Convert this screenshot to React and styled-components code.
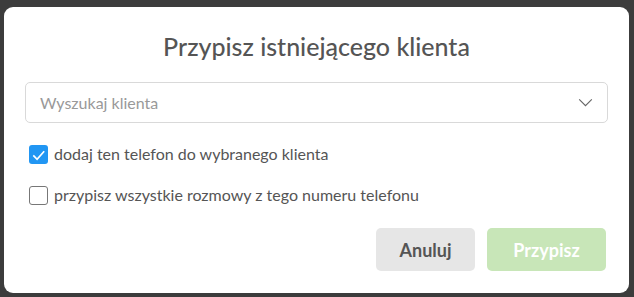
import React, { useState } from "react";
import styled, { createGlobalStyle } from "styled-components";

const Global = createGlobalStyle`
  html, body {
    margin: 0;
    padding: 0;
    background: #3c3c3c;
    font-family: Lato, "Open Sans", sans-serif;
  }
`;

export default function App() {
  const [addPhone, setAddPhone] = useState(true);
  const [assignAll, setAssignAll] = useState(false);

  return (
    <>
      <Global />
      <Backdrop>
        <Modal>
          <Title>Przypisz istniejącego klienta</Title>
          <Select>
            <Placeholder>Wyszukaj klienta</Placeholder>
            <Chevron viewBox="0 0 16 10">
              <path d="M1 1.5 L8 8.5 L15 1.5" fill="none" stroke="#666" strokeWidth="1.3" />
            </Chevron>
          </Select>
          <Options>
            <Option onClick={() => setAddPhone(!addPhone)}>
              <Box checked={addPhone}>
                {addPhone && (
                  <svg viewBox="0 0 20 20" width="20" height="20">
                    <path d="M4.5 10.5 L8.5 14.5 L16 6" fill="none" stroke="#fff" strokeWidth="1.8" />
                  </svg>
                )}
              </Box>
              dodaj ten telefon do wybranego klienta
            </Option>
            <Option onClick={() => setAssignAll(!assignAll)}>
              <Box checked={assignAll}>
                {assignAll && (
                  <svg viewBox="0 0 20 20" width="20" height="20">
                    <path d="M4.5 10.5 L8.5 14.5 L16 6" fill="none" stroke="#fff" strokeWidth="1.8" />
                  </svg>
                )}
              </Box>
              przypisz wszystkie rozmowy z tego numeru telefonu
            </Option>
          </Options>
          <Actions>
            <Button>Anuluj</Button>
            <Button primary disabled>Przypisz</Button>
          </Actions>
        </Modal>
      </Backdrop>
    </>
  );
}

const Backdrop = styled.div`
  width: 634px;
  height: 297px;
  padding: 7px 5px 4px 4px;
  box-sizing: border-box;
`;

const Modal = styled.div`
  background: #fff;
  border-radius: 9px;
  height: 100%;
  box-sizing: border-box;
  padding: 24px 21px 0 21px;
  display: flex;
  flex-direction: column;
`;

const Title = styled.h2`
  margin: 0;
  text-align: center;
  font-family: Lato, sans-serif;
  font-weight: 500;
  font-size: 25px;
  line-height: 30px;
  color: #555;
`;

const Select = styled.div`
  margin-top: 21px;
  height: 41px;
  border: 1px solid #d9d9d9;
  border-radius: 5px;
  display: flex;
  align-items: center;
  justify-content: space-between;
  padding: 0 14px 0 14px;
  box-sizing: border-box;
`;

const Placeholder = styled.span`
  font-size: 16px;
  color: #999;
`;

const Chevron = styled.svg`
  width: 15px;
  height: 9px;
`;

const Options = styled.div`
  margin-top: 21px;
  display: flex;
  flex-direction: column;
  gap: 21px;
  padding-left: 4px;
`;

const Option = styled.label`
  display: flex;
  align-items: center;
  gap: 6px;
  font-size: 16px;
  line-height: 20px;
  color: #555;
  cursor: pointer;
`;

const Box = styled.span`
  width: 19px;
  height: 19px;
  box-sizing: border-box;
  border-radius: 3px;
  display: flex;
  background: ${({ checked }) => (checked ? "#2196f3" : "#fff")};
  border: ${({ checked }) => (checked ? "none" : "1px solid #777")};
`;

const Actions = styled.div`
  margin-top: 23px;
  display: flex;
  justify-content: flex-end;
  gap: 12px;
  padding-right: 2px;
`;

const Button = styled.button`
  height: 43px;
  min-width: ${({ primary }) => (primary ? "119px" : "99px")};
  border: none;
  border-radius: 5px;
  font-family: Lato, sans-serif;
  font-weight: 700;
  font-size: 18px;
  background: ${({ primary }) => (primary ? "#c8e6b8" : "#e6e6e6")};
  color: ${({ primary }) => (primary ? "#fff" : "#555")};
  cursor: pointer;
`;
